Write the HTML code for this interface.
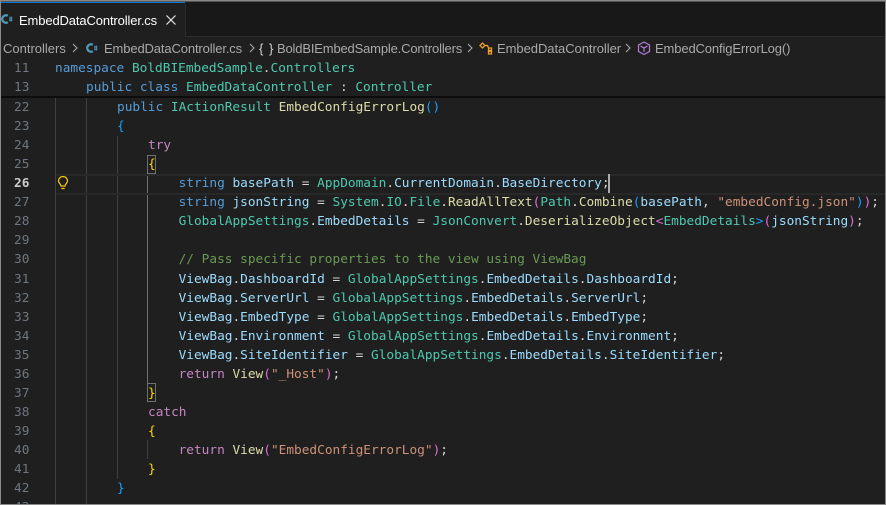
<!DOCTYPE html>
<html><head><meta charset="utf-8"><style>
html,body{margin:0;padding:0;background:#1f1f1f}
#r{position:relative;width:886px;height:505px;overflow:hidden;background:#1f1f1f}
#r div{position:absolute}
.l{white-space:pre;font:12.79px/19px "DejaVu Sans Mono",monospace;letter-spacing:0;color:#d4d4d4;height:19px}
.n{white-space:pre;font:12.79px/19px "DejaVu Sans Mono",monospace;color:#6e7681;left:14px;height:19px}
.g{width:1px;background:#404040}
.b{white-space:pre;font:13px/19px "Liberation Sans",sans-serif;color:#a9a9a9;top:39px;height:19px;letter-spacing:-.13px}
.k{color:#569cd6}.t{color:#4ec9b0}.m{color:#dcdcaa}.v{color:#9cdcfe}.s{color:#ce9178}.c{color:#6a9955}.f{color:#c586c0}
.y{color:#ffd700}.p{color:#da70d6}.u{color:#179fff}
</style></head><body><div id="r">
<div style="left:0;top:0;width:886px;height:36px;background:#181818"></div>
<div style="left:0;top:36px;width:886px;height:1px;background:#2b2b2b"></div>
<div style="left:1px;top:2px;width:184px;height:35px;background:#1f1f1f"></div>
<div style="left:1px;top:2px;width:184px;height:1px;background:#0078d4"></div>
<div style="left:185px;top:3px;width:1px;height:33px;background:#2b2b2b"></div>
<svg style="position:absolute;left:1px;top:11px" width="13" height="16" viewBox="0 0 13 16"><path d="M6.800 4.800A3.700 3.700 0 1 0 6.800 11.200" fill="none" stroke="#519aba" stroke-width="2.300"/><path d="M8 7h3.500M8 9.200h3.500M9 5.500v5M10.500 5.500v5" stroke="#519aba" stroke-width=".8"/></svg>
<div class="b" style="left:19px;top:11px;color:#fff">EmbedDataController.cs</div>
<svg style="position:absolute;left:165px;top:14px" width="12" height="12" viewBox="0 0 12 12"><path d="M1.500 1.500l9 9M10.500 1.500l-9 9" stroke="#e8e8e8" stroke-width="1.200"/></svg>

<div class="b" style="left:3px;letter-spacing:0">Controllers</div>
<svg style="position:absolute;left:71px;top:43px" width="8" height="10" viewBox="0 0 8 10"><path d="M2 1l4 4-4 4" fill="none" stroke="#a9a9a9" stroke-width="1.100"/></svg>
<svg style="position:absolute;left:86px;top:40px" width="13" height="16" viewBox="0 0 13 16"><path d="M6.800 4.800A3.700 3.700 0 1 0 6.800 11.200" fill="none" stroke="#519aba" stroke-width="2.300"/><path d="M8 7h3.500M8 9.200h3.500M9 5.500v5M10.500 5.500v5" stroke="#519aba" stroke-width=".8"/></svg>
<div class="b" style="left:104px">EmbedDataController.cs</div>
<svg style="position:absolute;left:248px;top:43px" width="8" height="10" viewBox="0 0 8 10"><path d="M2 1l4 4-4 4" fill="none" stroke="#a9a9a9" stroke-width="1.100"/></svg>
<div class="b" style="left:259px;color:#d4d4d4;letter-spacing:1px">{ }</div>
<div class="b" style="left:277px;letter-spacing:-.17px">BoldBIEmbedSample.Controllers</div>
<svg style="position:absolute;left:466px;top:43px" width="8" height="10" viewBox="0 0 8 10"><path d="M2 1l4 4-4 4" fill="none" stroke="#a9a9a9" stroke-width="1.100"/></svg>
<svg style="position:absolute;left:479px;top:41px" width="15" height="14" viewBox="0 0 15 14"><path d="M1 4.500L3.500 2 6 4.500 3.500 7zM9.500 7h3v2.500h-3zM9.500 10.500h3v2.500h-3zM6 4.500h2.500L10 8.300" fill="none" stroke="#ee9d28" stroke-width="1.300"/></svg>
<div class="b" style="left:497px;letter-spacing:-.05px">EmbedDataController</div>
<svg style="position:absolute;left:624px;top:43px" width="8" height="10" viewBox="0 0 8 10"><path d="M2 1l4 4-4 4" fill="none" stroke="#a9a9a9" stroke-width="1.100"/></svg>
<svg style="position:absolute;left:637px;top:41px" width="14" height="15" viewBox="0 0 14 15"><path d="M7 1l5.500 3v6.500L7 13.500 1.500 10.500V4zM3.500 5L7 7l3.500-2M7 7v4" fill="none" stroke="#b180d7" stroke-width="1.200"/></svg>
<div class="b" style="left:655px">EmbedConfigErrorLog()</div>

<div class="g" style="left:55px;top:97px;height:408px"></div>
<div class="g" style="left:86px;top:97px;height:408px"></div>
<div class="g" style="left:117px;top:136px;height:343px"></div>
<div class="g" style="left:147px;top:155px;height:246px;background:#707070"></div>
<div class="g" style="left:147px;top:440px;height:19px"></div>

<div style="left:56px;top:174px;width:830px;height:17px;border:solid #282828;border-width:2px 0"></div>
<div style="left:147px;top:155px;width:7px;height:17px;border:1px solid #707070"></div>
<div style="left:147px;top:383px;width:7px;height:17px;border:1px solid #707070"></div>
<div style="left:608px;top:174px;width:2px;height:19px;background:#aeafad"></div>
<svg style="position:absolute;left:57px;top:176px" width="12" height="14" viewBox="0 0 12 14"><path d="M4 10C4 8 1.500 7.500 1.500 4.800A4.500 4.300 0 0 1 10.500 4.800C10.500 7.500 8 8 8 10zM4.300 12.500h3.400" fill="none" stroke="#ffcc00" stroke-width="1.200"/></svg>

<div class="n" style="top:59px">11</div>
<div class="l" style="left:55px;top:59px"><span class="k">namespace</span> <span class="t">BoldBIEmbedSample</span>.<span class="t">Controllers</span></div>
<div class="n" style="top:78px">13</div>
<div class="l" style="left:86px;top:78px"><span class="k">public class</span> <span class="t">EmbedDataController</span> : <span class="t">Controller</span></div>

<div class="n" style="top:98px">22</div>
<div class="l" style="left:117px;top:98px"><span class="k">public</span> <span class="t">IActionResult</span> <span class="m">EmbedConfigErrorLog</span><span class="u">()</span></div>
<div class="n" style="top:117px">23</div>
<div class="l" style="left:117px;top:117px"><span class="u">{</span></div>
<div class="n" style="top:136px">24</div>
<div class="l" style="left:148px;top:136px"><span class="f">try</span></div>
<div class="n" style="top:155px">25</div>
<div class="l" style="left:148px;top:155px"><span class="y">{</span></div>
<div class="n" style="top:174px;color:#ccc;font-weight:bold">26</div>
<div class="l" style="left:178.600px;top:174px"><span class="k">string</span> <span class="v">basePath</span> = <span class="t">AppDomain</span>.<span class="v">CurrentDomain</span>.<span class="v">BaseDirectory</span>;</div>
<div class="n" style="top:193px">27</div>
<div class="l" style="left:178.600px;top:193px"><span class="k">string</span> <span class="v">jsonString</span> = <span class="t">System</span>.<span class="t">IO</span>.<span class="t">File</span>.<span class="m">ReadAllText</span><span class="p">(</span><span class="t">Path</span>.<span class="m">Combine</span><span class="u">(</span><span class="v">basePath</span>, <span class="s">"embedConfig.json"</span><span class="u">)</span><span class="p">)</span>;</div>
<div class="n" style="top:212px">28</div>
<div class="l" style="left:178.600px;top:212px"><span class="t">GlobalAppSettings</span>.<span class="v">EmbedDetails</span> = <span class="t">JsonConvert</span>.<span class="m">DeserializeObject</span><span class="p">&lt;</span><span class="t">EmbedDetails</span><span class="u">&gt;</span><span class="p">(</span><span class="v">jsonString</span><span class="p">)</span>;</div>
<div class="n" style="top:231px">29</div>
<div class="n" style="top:250px">30</div>
<div class="l" style="left:178.600px;top:250px"><span class="c">// Pass specific properties to the view using ViewBag</span></div>
<div class="n" style="top:270px">31</div>
<div class="l" style="left:178.600px;top:270px"><span class="v">ViewBag</span>.<span class="v">DashboardId</span> = <span class="t">GlobalAppSettings</span>.<span class="v">EmbedDetails</span>.<span class="v">DashboardId</span>;</div>
<div class="n" style="top:289px">32</div>
<div class="l" style="left:178.600px;top:289px"><span class="v">ViewBag</span>.<span class="v">ServerUrl</span> = <span class="t">GlobalAppSettings</span>.<span class="v">EmbedDetails</span>.<span class="v">ServerUrl</span>;</div>
<div class="n" style="top:308px">33</div>
<div class="l" style="left:178.600px;top:308px"><span class="v">ViewBag</span>.<span class="v">EmbedType</span> = <span class="t">GlobalAppSettings</span>.<span class="v">EmbedDetails</span>.<span class="v">EmbedType</span>;</div>
<div class="n" style="top:327px">34</div>
<div class="l" style="left:178.600px;top:327px"><span class="v">ViewBag</span>.<span class="v">Environment</span> = <span class="t">GlobalAppSettings</span>.<span class="v">EmbedDetails</span>.<span class="v">Environment</span>;</div>
<div class="n" style="top:346px">35</div>
<div class="l" style="left:178.600px;top:346px"><span class="v">ViewBag</span>.<span class="v">SiteIdentifier</span> = <span class="t">GlobalAppSettings</span>.<span class="v">EmbedDetails</span>.<span class="v">SiteIdentifier</span>;</div>
<div class="n" style="top:365px">36</div>
<div class="l" style="left:178.600px;top:365px"><span class="f">return</span> <span class="m">View</span><span class="p">(</span><span class="s">"_Host"</span><span class="p">)</span>;</div>
<div class="n" style="top:384px">37</div>
<div class="l" style="left:148px;top:384px"><span class="y">}</span></div>
<div class="n" style="top:403px">38</div>
<div class="l" style="left:148px;top:403px"><span class="f">catch</span></div>
<div class="n" style="top:422px">39</div>
<div class="l" style="left:148px;top:422px"><span class="y">{</span></div>
<div class="n" style="top:441px">40</div>
<div class="l" style="left:178.600px;top:441px"><span class="f">return</span> <span class="m">View</span><span class="p">(</span><span class="s">"EmbedConfigErrorLog"</span><span class="p">)</span>;</div>
<div class="n" style="top:460px">41</div>
<div class="l" style="left:148px;top:460px"><span class="y">}</span></div>
<div class="n" style="top:479px">42</div>
<div class="l" style="left:117px;top:479px"><span class="u">}</span></div>
<div class="n" style="top:498px">43</div>

<div style="left:0;top:96px;width:886px;height:2px;background:#0c0c0c"></div>
<div style="left:0;top:0;width:886px;height:1px;background:#8a8a8a"></div>
<div style="left:0;top:1px;width:886px;height:1px;background:#555"></div>
<div style="left:0;top:0;width:1px;height:505px;background:#8a8a8a"></div>
<div style="left:885px;top:0;width:1px;height:505px;background:#8a8a8a"></div>
<div style="left:0;top:504px;width:886px;height:1px;background:#8a8a8a"></div>
</div></body></html>
